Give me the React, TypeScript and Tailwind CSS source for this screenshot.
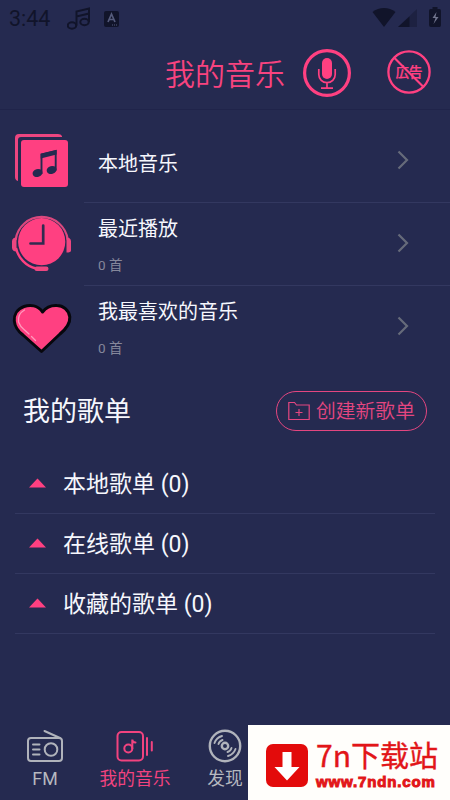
import React from "react";

const PINK = "#ff4081";

function StatusBar() {
  return (
    <div className="flex h-[38px] items-start text-[#11142a]">
      <span className="mt-[7px] ml-[9px] w-[58px] text-[21.500px] leading-6">3:44</span>
      <svg className="mt-[7px] h-[23px] w-[24px]" viewBox="0 0 24 23" fill="none" stroke="#11142a" strokeWidth="2">
        <ellipse cx="5" cy="18.500" rx="4.200" ry="3.200" />
        <ellipse cx="17.500" cy="15" rx="4.200" ry="3.200" />
        <path d="M9.500 18.500V4.500L22 1.500v13.500M9.500 9.500L22 6.500" />
      </svg>
      <svg className="mt-[11px] ml-[13px] h-[16px] w-[15px]" viewBox="0 0 15 16">
        <rect width="15" height="16" rx="2" fill="#11142a" />
        <path d="M4 11L7.500 3L11 11M5.200 8.500H9.800" fill="none" stroke="#555b7c" strokeWidth="1.700" />
        <path d="M8 14h5" stroke="#555b7c" strokeDasharray="1 1" />
      </svg>
      <svg className="mt-[7px] ml-auto h-[21px] w-[78px]" viewBox="0 0 78 21" fill="#11142a">
        <path d="M.5 5C7-.3 17-.3 23.500 5L12 20z" />
        <path d="M45 2v18H26z" opacity=".4" />
        <path d="M37.500 9.500V20H26z" />
        <path d="M58.500 2h2V0h5v2h2q1.500 0 1.500 2v14q0 2-1.500 2h-8.500q-2 0-2-2V4q0-2 1.500-2z" />
        <path d="M64.500 5l-4 6h3l-2 6 5-7h-3z" fill="#70748d" />
      </svg>
    </div>
  );
}

function MicIcon() {
  return (
    <svg className="h-12 w-12" viewBox="0 0 48 48" fill="none" stroke={PINK}>
      <circle cx="24" cy="24" r="22.400" strokeWidth="3.200" />
      <rect x="19" y="9" width="10" height="21" rx="5" fill={PINK} stroke="none" />
      <path d="M15.800 20v5.500a8.200 8.200 0 0 0 16.400 0V20M24 34v5M18 39.200h12" strokeWidth="1.700" />
    </svg>
  );
}

function NoAdsIcon() {
  return (
    <svg className="h-11 w-11" viewBox="0 0 44 44" fill="none" stroke={PINK}>
      <circle cx="22" cy="22" r="20.600" strokeWidth="2.300" />
      <text x="22" y="27.300" textAnchor="middle" fill={PINK} stroke={PINK} strokeWidth=".2" fontSize="13.500" fontWeight="500" fontFamily="Noto Sans CJK JP">広告</text>
      <path d="M7.500 8L36.500 37" strokeWidth="2.100" />
    </svg>
  );
}

function AlbumIcon() {
  return (
    <svg className="h-[60px] w-[60px]" viewBox="0 0 60 60">
      <path d="M50 4Q49 2 46 2H7Q3 2 3 6V45q0 3 3 4V8q0-3 3-3H50z" fill="#ed4680" />
      <rect x="9" y="8" width="47" height="47" rx="3" fill={PINK} />
      <path d="M29.500 42V22.500L43.700 19v19.500" fill="none" stroke="#252a50" strokeWidth="1.900" />
      <path d="M28.700 21.800L44.600 18v4.500L28.700 26.400z" fill="#252a50" />
      <ellipse cx="25.500" cy="41" rx="5" ry="4" fill="#252a50" transform="rotate(-15 25.500 41)" />
      <ellipse cx="39.600" cy="38" rx="5" ry="4" fill="#252a50" transform="rotate(-15 39.600 38)" />
    </svg>
  );
}

function RecentIcon() {
  return (
    <svg className="h-[60px] w-[60px]" viewBox="0 0 60 60" fill="none">
      <circle cx="29.700" cy="28.700" r="23.600" fill={PINK} />
      <path d="M3.600 27A26.300 26.300 0 0 1 55.800 27" stroke="#db487e" strokeWidth="2.200" />
      <path d="M4 35A27 27 0 0 0 24 55.500" stroke={PINK} strokeWidth="2.400" />
      <path d="M4.500 24.500q-4.500 0-4.500 4v6q0 4 4.500 4zM54.500 24.500q4.500 0 4.500 4v9q0 2-4.500 2z" fill="#ed4680" />
      <rect x="22.500" y="53.500" width="14" height="4.500" rx="2.200" fill="#ed4680" />
      <path d="M31.200 12.500V30.500H18.500" stroke="#302b50" strokeWidth="2.700" strokeLinecap="round" />
    </svg>
  );
}

function HeartIcon() {
  return (
    <svg className="h-[60px] w-[60px]" viewBox="0 0 60 60" fill="none">
      <path d="M30.500 12C26 5 18 4.500 12 6.500C5 9 1.800 15 2.300 21C3 28 7 32 11 35L29.500 51.500L48 34C54 29 58.300 24 57.800 17C57 10 51 5.500 45 5.500C38 5 34 7.500 30.500 12z" fill={PINK} stroke="#07070d" strokeWidth="3" strokeLinejoin="round" />
      <path d="M12.500 10Q5.500 14 6.500 22Q8.500 27 12 29.500L17 34M19.500 36.500l4 4" stroke="#ff9abc" strokeWidth="1.300" strokeLinecap="round" />
    </svg>
  );
}

function Entry({ icon, title, count, last }: { icon: React.ReactNode; title: string; count?: string; last?: boolean }) {
  return (
    <div className="flex h-[83px] pl-3">
      <div className="w-[72px] pt-[10px]">{icon}</div>
      <div className={"flex flex-1 border-b pl-[14px] " + (last ? "border-transparent" : "border-[#333860]")}>
        <div className={"flex-1 " + (count ? "pt-[12px]" : "pt-[30px]")}>
          <div className="text-[20px] leading-[28px] text-[#f6f7fd]">{title}</div>
          {count && <div className="mt-[13px] text-[13.500px] leading-[18px] text-[#85879b]">{count}</div>}
        </div>
        <svg className="mt-[30px] mr-[40px] h-[20px] w-[14px]" viewBox="0 0 14 20" fill="none" stroke="#666b7a" strokeWidth="2.200">
          <path d="M2.500 1.500L11 10L2.500 18.500" />
        </svg>
      </div>
    </div>
  );
}

function Playlist({ title }: { title: string }) {
  return (
    <div className="mx-[15px] flex h-[60px] items-center border-b border-[#333860] text-[23px] text-[#f6f7fd]">
      <svg className="mb-[2px] ml-[14px] h-[10px] w-[17px]" viewBox="0 0 17 10"><path d="M0 9.500L8.500 .5L17 9.500z" fill={PINK} /></svg>
      <span className="mt-[2px] ml-[17px] leading-8">{title}</span>
    </div>
  );
}

function RadioIcon() {
  return (
    <svg className="h-9 w-10" viewBox="0 0 40 36" fill="none" stroke="#b0b3bb" strokeWidth="2" strokeLinecap="round">
      <rect x="3" y="10" width="34" height="23" rx="3" />
      <path d="M19.500 3L35 10M8 16.500h6.500M8 21.500h6.500M8 26.500h6.500" />
      <circle cx="26" cy="21.500" r="6.300" />
    </svg>
  );
}

function MusicIcon() {
  return (
    <svg className="h-9 w-10" viewBox="0 0 40 36" fill="none" stroke="#f2437f" strokeWidth="2" strokeLinecap="round">
      <rect x="2.500" y="4" width="25.500" height="28.500" rx="4" />
      <circle cx="13.300" cy="20.500" r="4" />
      <path d="M17.300 20.500V11.500Q17.300 14.500 20.500 14.500M32 10v17M36.800 14v8.500" />
    </svg>
  );
}

function DiscIcon() {
  return (
    <svg className="h-9 w-10" viewBox="0 0 40 36" fill="none" stroke="#b0b3bb" strokeWidth="2.400" strokeLinecap="round">
      <circle cx="20" cy="18" r="15.200" />
      <circle cx="20" cy="18" r="3.200" />
      <path d="M9.500 15Q11.500 9.500 17 8M13.500 16Q14.500 12.800 17.500 12M30.500 21Q28.500 26.500 23 28M26.500 20Q25.500 23.200 22.500 24" strokeWidth="1.900" />
    </svg>
  );
}

function Tab({ icon, label, color }: { icon: React.ReactNode; label: string; color: string }) {
  return (
    <div className={"flex w-[90px] flex-col items-center " + color}>
      {icon}
      <span className="mt-[3px] text-[17.800px] leading-6 whitespace-nowrap">{label}</span>
    </div>
  );
}

export default function App() {
  return (
    <div className="relative flex h-[800px] w-[450px] flex-col overflow-hidden bg-[#252a50] font-['Roboto','Noto_Sans_CJK_SC',sans-serif]">
      <StatusBar />
      <header className="flex h-[72px] items-start border-b border-[#20244a]">
        <h1 className="mt-[16px] ml-[165px] w-[138px] text-[30px] leading-[42px] font-[350] text-[#f8437f]">我的音乐</h1>
        <div className="mt-[11px]"><MicIcon /></div>
        <div className="mt-[12px] ml-[36px]"><NoAdsIcon /></div>
      </header>
      <main className="flex-1 pt-[10px]">
        <Entry icon={<div className="pt-[2px]"><AlbumIcon /></div>} title="本地音乐" />
        <Entry icon={<RecentIcon />} title="最近播放" count="0 首" />
        <Entry icon={<div className="pt-[4px]"><HeartIcon /></div>} title="我最喜欢的音乐" count="0 首" last />
        <div className="flex h-[85px] items-start justify-between pt-[22px] pr-[23px] pl-[23px]">
          <h2 className="mt-[2px] text-[27px] leading-[38px] text-[#f6f7fd]">我的歌单</h2>
          <button className="flex h-10 w-[151px] items-center rounded-full border border-[#e44680] pl-[11px] text-[#e44680]">
            <svg className="h-[20px] w-[22px]" viewBox="0 0 22 20" fill="none" stroke="#e44680" strokeWidth="1.200">
              <path d="M.8 18.500V1.500H6.500L8.500 4H21.200V18.500zM11 8v7M7.500 11.500h7" />
            </svg>
            <span className="mt-[2px] ml-[6px] text-[19.800px] leading-7 font-[350] whitespace-nowrap">创建新歌单</span>
          </button>
        </div>
        <Playlist title="本地歌单 (0)" />
        <Playlist title="在线歌单 (0)" />
        <Playlist title="收藏的歌单 (0)" />
      </main>
      <nav className="flex h-[72px]">
        <Tab icon={<RadioIcon />} label="FM" color="text-[#b5b8bf]" />
        <Tab icon={<MusicIcon />} label="我的音乐" color="text-[#f2437f]" />
        <Tab icon={<DiscIcon />} label="发现" color="text-[#b5b8bf]" />
      </nav>
      <div className="absolute right-0 bottom-0 flex h-[75px] w-[202px] bg-[#fffefb]">
        <svg className="mt-[19px] ml-[18px] h-[43px] w-[42px]" viewBox="0 0 42 43">
          <rect width="42" height="43" rx="7" fill="#e30b0b" />
          <path d="M16.500 8h9v15H33.500L21 36.500L8.500 23h8z" fill="#fff" />
        </svg>
        <div className="ml-[8px] whitespace-nowrap text-[#e21518]">
          <div className="mt-[11px] h-[37px] font-['Noto_Sans_CJK_SC'] text-[29px] leading-[37px] font-normal [-webkit-text-stroke:0.400px_#e21518]"><span className="text-[30px]">7n</span>下载站</div>
          <div className="font-['Liberation_Sans',sans-serif] text-[15px] leading-[18px] font-bold tracking-[0.850px] [-webkit-text-stroke:1px_#e21518]">www.7ndn.com</div>
        </div>
      </div>
    </div>
  );
}
